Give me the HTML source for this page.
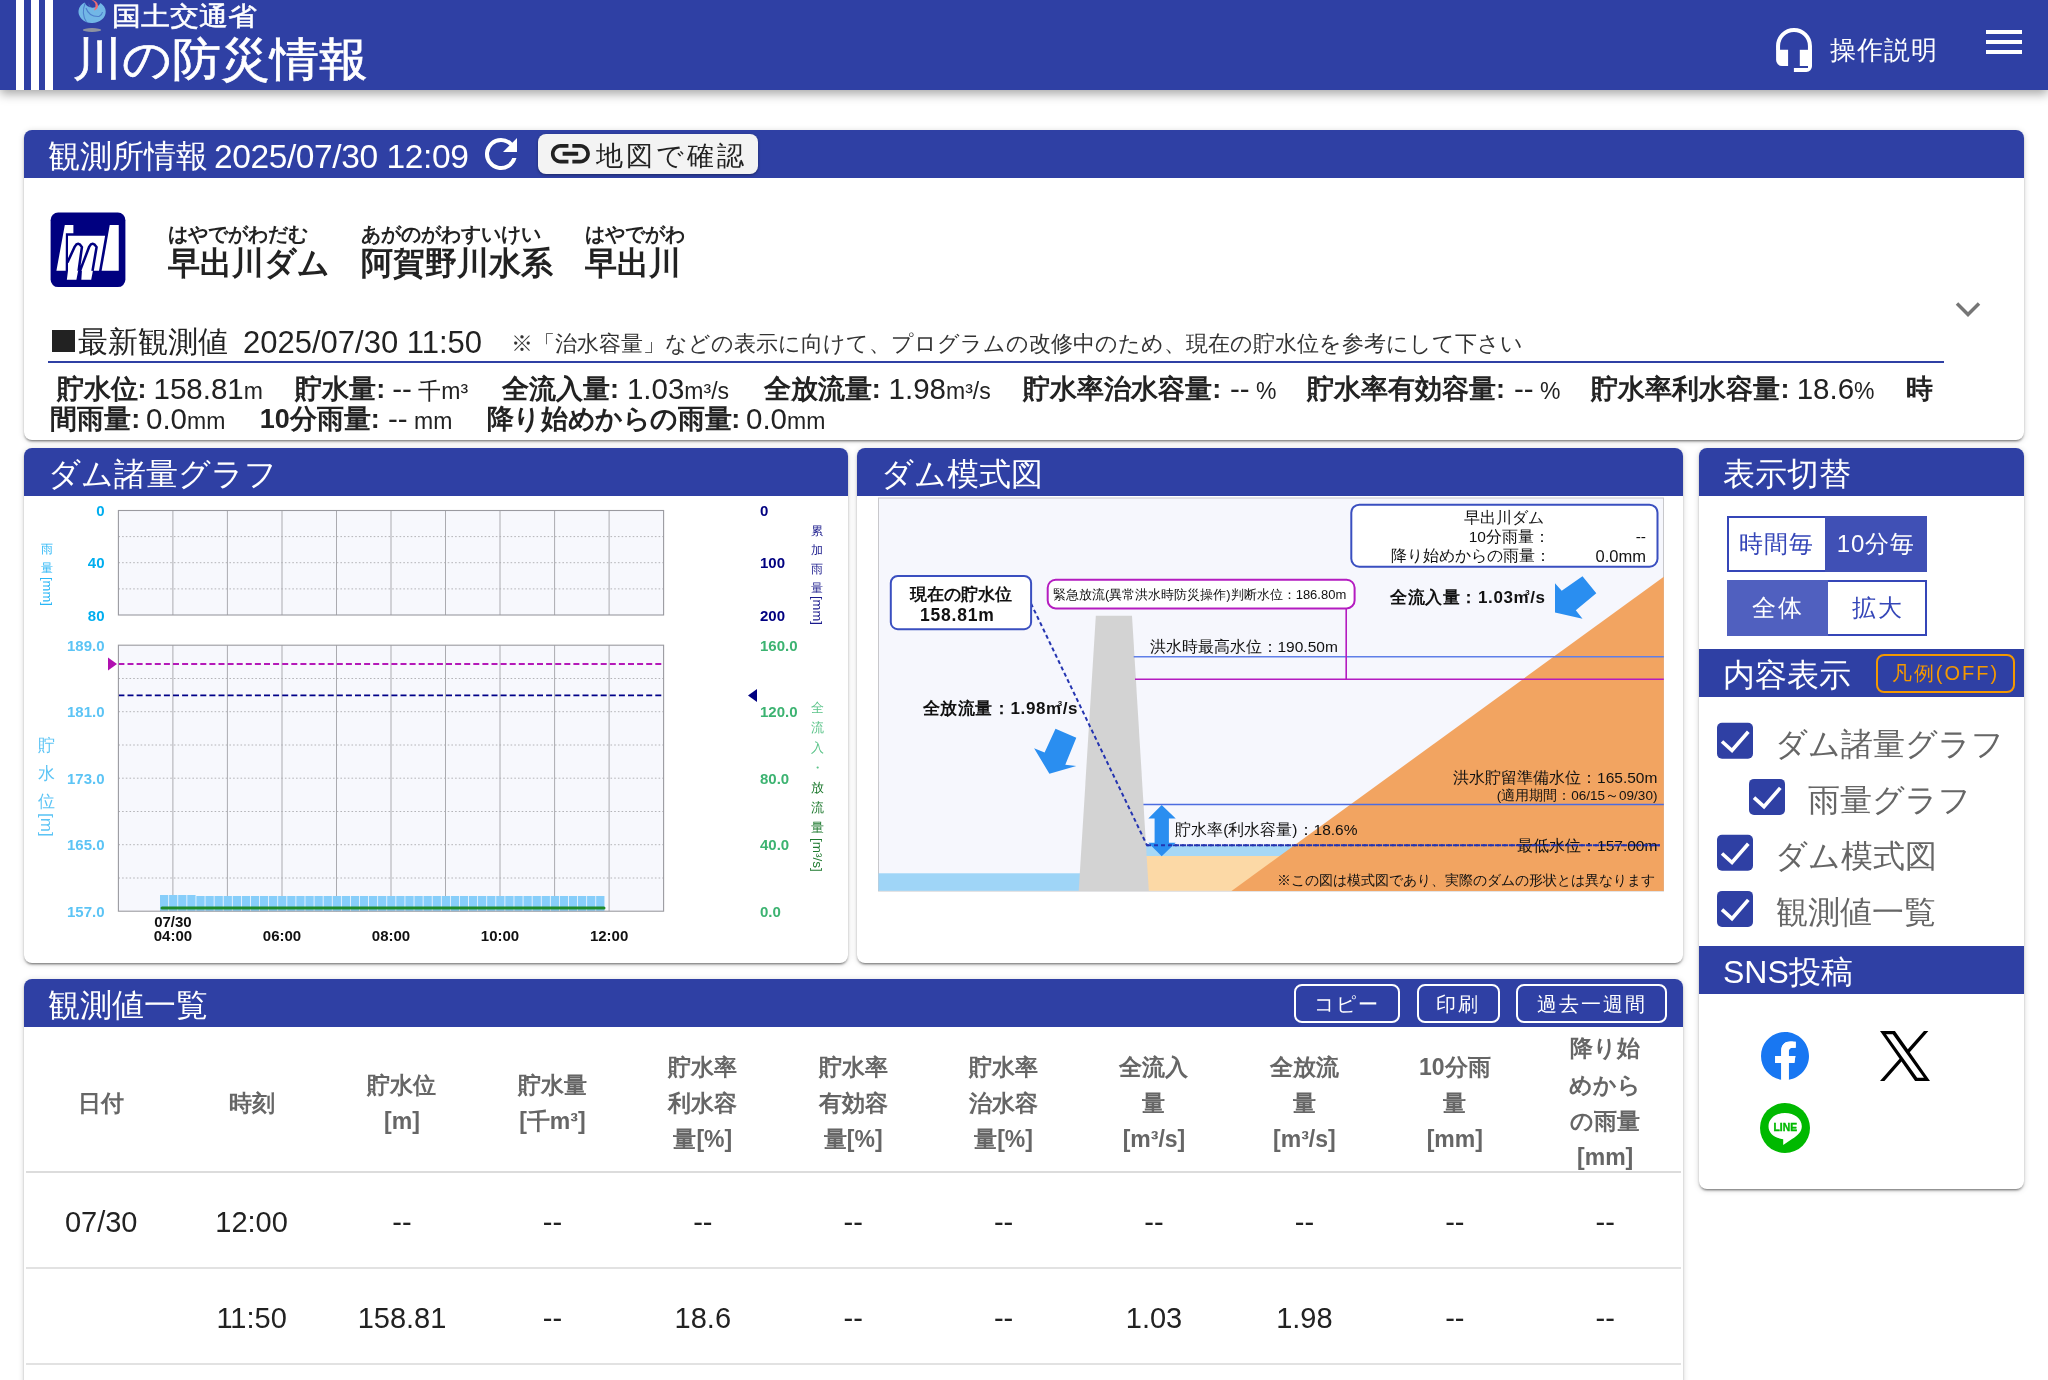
<!DOCTYPE html>
<html lang="ja">
<head>
<meta charset="utf-8">
<style>
*{box-sizing:border-box;margin:0;padding:0}
body{will-change:transform}
html,body{width:2048px;height:1380px;overflow:hidden;background:#fff;font-family:"Liberation Sans",sans-serif;color:#222}
.abs{position:absolute}
.hdr{position:absolute;left:0;top:0;width:2048px;height:90px;background:#2f40a4;box-shadow:0 4px 10px rgba(0,0,0,.35);z-index:5}
.stripe{position:absolute;top:0;height:90px;width:8px;background:#fff}
.card{position:absolute;background:#fff;border-radius:8px;box-shadow:0 2px 2px rgba(0,0,0,.24),0 3px 1px -2px rgba(0,0,0,.2),0 1px 6px rgba(0,0,0,.16)}
.bar{position:absolute;background:#2f40a4;border-radius:8px 8px 0 0;color:#fff;font-size:32px;line-height:48px;white-space:nowrap}
.t{position:absolute;white-space:nowrap}
small{font-size:22px;line-height:0}
b{font-weight:bold}
.tbtn{top:4.5px;height:39px;line-height:37px;border:2px solid #fff;border-radius:8px;text-align:center;font-size:20px;letter-spacing:2px}
.th{position:absolute;top:1031px;height:144px;display:flex;align-items:center;justify-content:center;text-align:center;font-size:23px;line-height:36.3px;font-weight:bold;color:#666}
.td{position:absolute;height:96px;line-height:100px;text-align:center;font-size:29px;color:#222}
.obs .t{font-size:27px;line-height:30px;color:#222}
.obs span.t{font-size:29.5px}
.obs small{font-size:23px}
</style>
</head>
<body>
<!-- HEADER -->
<div class="hdr">
  <div class="stripe" style="left:16px"></div>
  <div class="stripe" style="left:31px"></div>
  <div class="stripe" style="left:45px"></div>
  <svg class="abs" style="left:70px;top:0" width="45" height="36" viewBox="70 0 45 36">
    <defs><filter id="bl" x="-20%" y="-20%" width="140%" height="140%"><feGaussianBlur stdDeviation="0.45"/></filter></defs>
    <g filter="url(#bl)">
    <path d="M84.5 2.5 A13.6 11.2 0 1 0 100.5 3 A9 9 0 0 1 84.5 2.5Z" fill="#72b7e6"/>
    <path d="M88.5 1.5 A9 9 0 0 0 100 10.5 A10 9 0 0 1 88.5 1.5Z" fill="#72b7e6"/>
    <path d="M85 3.5 Q81 14 86.5 22" fill="none" stroke="#4d7fcc" stroke-width="1.1"/>
    <path d="M86 8 Q89 17 99 16.5 Q102 15 102.5 12" fill="none" stroke="#4d7fcc" stroke-width="1.1"/>
    <path d="M90.5 -0.5 Q97.5 0.5 98 5.5 Q98 9.5 94 10.5 Q96 7 95.5 4.5 Q95 1.5 90.5 -0.5Z" fill="#ef6c72"/>
    <ellipse cx="92" cy="30" rx="9.2" ry="1.9" fill="#8e92a0"/>
    </g>
  </svg>
  <div class="t" style="left:112px;top:1px;font-size:29px;line-height:32px;color:#fff;-webkit-text-stroke:0.6px #fff;transform:scaleY(0.9);transform-origin:0 3px">国土交通省</div>
  <div class="t" style="left:73px;top:34px;font-size:49px;line-height:52px;color:#fff;letter-spacing:0px;transform:scaleY(0.94);transform-origin:0 3px;-webkit-text-stroke:0.7px #fff">川の防災情報</div>
  <!-- headset -->
  <svg class="abs" style="left:1770px;top:22px" width="50" height="56" viewBox="1770 22 50 56">
    <path d="M1778.05 50 V45.9 A15.95 15.95 0 0 1 1809.95 45.9 V50" fill="none" stroke="#fff" stroke-width="4"/>
    <path d="M1776.1 49.8 H1788.1 V66 H1782 A5.9 5.9 0 0 1 1776.1 60.1 Z" fill="#fff"/>
    <path d="M1799.8 49.8 H1812 V66 H1799.8 Z" fill="#fff"/>
    <path d="M1812 49.8 V66.3 A5.6 5.6 0 0 1 1806.4 71.9 H1793.9 V67.9 H1808 V49.8 Z" fill="#fff"/>
  </svg>
  <div class="t" style="left:1830px;top:34px;font-size:26px;line-height:32px;color:#fff;letter-spacing:1px">操作説明</div>
  <div class="abs" style="left:1986px;top:30px;width:36px;height:4px;background:#fff"></div>
  <div class="abs" style="left:1986px;top:40px;width:36px;height:4px;background:#fff"></div>
  <div class="abs" style="left:1986px;top:50px;width:36px;height:4px;background:#fff"></div>
</div>

<!-- SECTION 1 -->
<div class="card" style="left:24px;top:130px;width:2000px;height:310px"></div>
<div class="bar" style="left:24px;top:130px;width:2000px;height:48px">
  <span class="t" style="left:24px;top:1.5px">観測所情報</span><span class="t" style="left:190px;top:3px;font-size:33.5px;letter-spacing:-0.4px">2025/07/30 12:09</span>
  <span class="t" style="left:453px;top:0px;width:48px;height:48px">
    <svg width="48" height="48" viewBox="0 0 24 24" style="display:block"><path d="M17.65 6.35A7.96 7.96 0 0 0 12 4a8 8 0 1 0 7.73 10h-2.08A6 6 0 1 1 12 6c1.66 0 3.14.69 4.22 1.78L13 11h7V4l-2.35 2.35z" fill="#fff"/></svg>
  </span>
  <span class="abs" style="left:514px;top:4px;width:220px;height:40px;background:#f3f3f3;border-radius:8px;box-shadow:0 1px 3px rgba(0,0,0,.4)">
    <svg class="abs" style="left:9.4px;top:8px" width="46.8" height="23.4" viewBox="0 0 24 12" preserveAspectRatio="none"><path d="M3.9 6c0-1.71 1.39-3.1 3.1-3.1h4V1H7C4.24 1 2 3.24 2 6s2.24 5 5 5h4V9.1H7C5.29 9.1 3.9 7.71 3.9 6zM8 7h8V5H8v2zm9-6h-4v1.9h4c1.71 0 3.1 1.39 3.1 3.1s-1.39 3.1-3.1 3.1h-4V11h4c2.76 0 5-2.24 5-5s-2.24-5-5-5z" fill="#222"/></svg>
    <span class="t" style="left:58px;top:-2px;font-size:27px;color:#222;letter-spacing:3px">地図で確認</span>
  </span>
</div>
<!-- station -->
<svg class="abs" style="left:48px;top:210px" width="80" height="80" viewBox="0 0 1380 1380">
  <rect x="45" y="45" width="1290" height="1285" rx="130" fill="#000080"/>
  <path d="M290 260 H438 V400 H308 L305 1050 H145 Z" fill="#fff"/>
  <path d="M1065 260 H1220 V1050 H925 Z" fill="#fff"/>
  <path d="M345 445 H985 L880 1050 H775 L745 1205 H575 L585 1050 H520 L490 1205 H325 L345 1050 Z" fill="#fff"/>
  <path d="M335 905 L462 630 Q520 530 585 640 L528 1050 M552 1050 L712 630 Q770 530 838 640 L768 1050" fill="none" stroke="#000080" stroke-width="44" stroke-linejoin="round"/>
</svg>
<div class="t" style="left:168px;top:222px;font-size:20px;line-height:24px;font-weight:bold;color:#222">はやでがわだむ</div>
<div class="t" style="left:168px;top:244px;font-size:32px;line-height:38px;font-weight:bold;color:#222">早出川ダム</div>
<div class="t" style="left:361px;top:222px;font-size:20px;line-height:24px;font-weight:bold;color:#222">あがのがわすいけい</div>
<div class="t" style="left:361px;top:244px;font-size:32px;line-height:38px;font-weight:bold;color:#222">阿賀野川水系</div>
<div class="t" style="left:585px;top:222px;font-size:20px;line-height:24px;font-weight:bold;color:#222">はやでがわ</div>
<div class="t" style="left:585px;top:244px;font-size:32px;line-height:38px;font-weight:bold;color:#222">早出川</div>
<svg class="abs" style="left:1954px;top:298px" width="28" height="22" viewBox="0 0 28 22"><path d="M3 5.6 L14 16.6 L25 5.6" fill="none" stroke="#767676" stroke-width="3.5"/></svg>
<div class="abs" style="left:51.5px;top:329.5px;width:23.5px;height:22.5px;background:#222"></div>
<div class="t" style="left:78px;top:322px;font-size:30px;line-height:40px;color:#222">最新観測値</div>
<div class="t" style="left:243px;top:323px;font-size:31px;line-height:40px;color:#222">2025/07/30 11:50</div>
<div class="t" style="left:511px;top:330px;font-size:22px;line-height:28px;color:#333">※「治水容量」などの表示に向けて、プログラムの改修中のため、現在の貯水位を参考にして下さい</div>
<div class="abs" style="left:48px;top:361px;width:1896px;height:2px;background:#2f40a4"></div>
<div class="obs">
<b class="t" style="left:56.5px;top:374px">貯水位:</b>
<span class="t" style="left:153.5px;top:374px">158.81<small>m</small></span>
<b class="t" style="left:295.2px;top:374px">貯水量:</b>
<span class="t" style="left:392.2px;top:374px">--<small>&nbsp;千m³</small></span>
<b class="t" style="left:502px;top:374px">全流入量:</b>
<span class="t" style="left:626.9px;top:374px">1.03<small>m³/s</small></span>
<b class="t" style="left:763.7px;top:374px">全放流量:</b>
<span class="t" style="left:888.6px;top:374px">1.98<small>m³/s</small></span>
<b class="t" style="left:1023.3px;top:374px">貯水率治水容量:</b>
<span class="t" style="left:1230.0px;top:374px">--<small>&nbsp;%</small></span>
<b class="t" style="left:1307px;top:374px">貯水率有効容量:</b>
<span class="t" style="left:1514.0px;top:374px">--<small>&nbsp;%</small></span>
<b class="t" style="left:1591.4px;top:374px">貯水率利水容量:</b>
<span class="t" style="left:1796.7px;top:374px">18.6<small>%</small></span>
<b class="t" style="left:1905.8px;top:374px">時</b>
<b class="t" style="left:50.2px;top:404px">間雨量:</b>
<span class="t" style="left:146.0px;top:404px">0.0<small>mm</small></span>
<b class="t" style="left:259.7px;top:404px">10分雨量:</b>
<span class="t" style="left:388.0px;top:404px">--<small>&nbsp;mm</small></span>
<b class="t" style="left:486.9px;top:404px;letter-spacing:-0.4px">降り始めからの雨量:</b>
<span class="t" style="left:746.0px;top:404px">0.0<small>mm</small></span>
</div>


<!-- PANEL A -->
<div class="card" style="left:24px;top:448px;width:824px;height:515px"></div>
<div class="bar" style="left:24px;top:448px;width:824px;height:48px;line-height:48px"><span class="t" style="left:24px;top:1.5px">ダム諸量グラフ</span></div>
<svg class="abs" style="left:24px;top:496px" width="824" height="467" viewBox="24 496 824 467" font-family="Liberation Sans, sans-serif">
<rect x="118.4" y="510.5" width="545.2" height="104.5" fill="#f7f8fd"/>
<line x1="118.4" y1="536.6" x2="663.6" y2="536.6" stroke="#b4b4b8" stroke-width="1" stroke-dasharray="1.6 2.1"/>
<line x1="118.4" y1="562.7" x2="663.6" y2="562.7" stroke="#b4b4b8" stroke-width="1" stroke-dasharray="1.6 2.1"/>
<line x1="118.4" y1="588.9" x2="663.6" y2="588.9" stroke="#b4b4b8" stroke-width="1" stroke-dasharray="1.6 2.1"/>
<line x1="172.9" y1="510.5" x2="172.9" y2="615" stroke="#ababb0" stroke-width="1"/>
<line x1="227.4" y1="510.5" x2="227.4" y2="615" stroke="#ababb0" stroke-width="1"/>
<line x1="282.0" y1="510.5" x2="282.0" y2="615" stroke="#ababb0" stroke-width="1"/>
<line x1="336.5" y1="510.5" x2="336.5" y2="615" stroke="#ababb0" stroke-width="1"/>
<line x1="391.0" y1="510.5" x2="391.0" y2="615" stroke="#ababb0" stroke-width="1"/>
<line x1="445.5" y1="510.5" x2="445.5" y2="615" stroke="#ababb0" stroke-width="1"/>
<line x1="500.0" y1="510.5" x2="500.0" y2="615" stroke="#ababb0" stroke-width="1"/>
<line x1="554.6" y1="510.5" x2="554.6" y2="615" stroke="#ababb0" stroke-width="1"/>
<line x1="609.1" y1="510.5" x2="609.1" y2="615" stroke="#ababb0" stroke-width="1"/>
<rect x="118.4" y="510.5" width="545.2" height="104.5" fill="none" stroke="#9a9aa0" stroke-width="1.1"/>
<rect x="118.4" y="645.2" width="545.2" height="266.0" fill="#f7f8fd"/>
<line x1="118.4" y1="678.5" x2="663.6" y2="678.5" stroke="#b4b4b8" stroke-width="1" stroke-dasharray="1.6 2.1"/>
<line x1="118.4" y1="711.7" x2="663.6" y2="711.7" stroke="#b4b4b8" stroke-width="1" stroke-dasharray="1.6 2.1"/>
<line x1="118.4" y1="745.0" x2="663.6" y2="745.0" stroke="#b4b4b8" stroke-width="1" stroke-dasharray="1.6 2.1"/>
<line x1="118.4" y1="778.2" x2="663.6" y2="778.2" stroke="#b4b4b8" stroke-width="1" stroke-dasharray="1.6 2.1"/>
<line x1="118.4" y1="811.5" x2="663.6" y2="811.5" stroke="#b4b4b8" stroke-width="1" stroke-dasharray="1.6 2.1"/>
<line x1="118.4" y1="844.7" x2="663.6" y2="844.7" stroke="#b4b4b8" stroke-width="1" stroke-dasharray="1.6 2.1"/>
<line x1="118.4" y1="878.0" x2="663.6" y2="878.0" stroke="#b4b4b8" stroke-width="1" stroke-dasharray="1.6 2.1"/>
<line x1="172.9" y1="645.2" x2="172.9" y2="911.2" stroke="#ababb0" stroke-width="1"/>
<line x1="227.4" y1="645.2" x2="227.4" y2="911.2" stroke="#ababb0" stroke-width="1"/>
<line x1="282.0" y1="645.2" x2="282.0" y2="911.2" stroke="#ababb0" stroke-width="1"/>
<line x1="336.5" y1="645.2" x2="336.5" y2="911.2" stroke="#ababb0" stroke-width="1"/>
<line x1="391.0" y1="645.2" x2="391.0" y2="911.2" stroke="#ababb0" stroke-width="1"/>
<line x1="445.5" y1="645.2" x2="445.5" y2="911.2" stroke="#ababb0" stroke-width="1"/>
<line x1="500.0" y1="645.2" x2="500.0" y2="911.2" stroke="#ababb0" stroke-width="1"/>
<line x1="554.6" y1="645.2" x2="554.6" y2="911.2" stroke="#ababb0" stroke-width="1"/>
<line x1="609.1" y1="645.2" x2="609.1" y2="911.2" stroke="#ababb0" stroke-width="1"/>
<rect x="160.00" y="895" width="8.29" height="16.200000000000045" fill="#87cefa"/>
<rect x="169.09" y="895" width="8.29" height="16.200000000000045" fill="#87cefa"/>
<rect x="178.17" y="895" width="8.29" height="16.200000000000045" fill="#87cefa"/>
<rect x="187.26" y="895" width="8.29" height="16.200000000000045" fill="#87cefa"/>
<rect x="196.35" y="896" width="8.29" height="15.200000000000045" fill="#87cefa"/>
<rect x="205.43" y="896" width="8.29" height="15.200000000000045" fill="#87cefa"/>
<rect x="214.52" y="896" width="8.29" height="15.200000000000045" fill="#87cefa"/>
<rect x="223.61" y="896" width="8.29" height="15.200000000000045" fill="#87cefa"/>
<rect x="232.69" y="896" width="8.29" height="15.200000000000045" fill="#87cefa"/>
<rect x="241.78" y="896" width="8.29" height="15.200000000000045" fill="#87cefa"/>
<rect x="250.87" y="896" width="8.29" height="15.200000000000045" fill="#87cefa"/>
<rect x="259.95" y="896" width="8.29" height="15.200000000000045" fill="#87cefa"/>
<rect x="269.04" y="896" width="8.29" height="15.200000000000045" fill="#87cefa"/>
<rect x="278.13" y="896" width="8.29" height="15.200000000000045" fill="#87cefa"/>
<rect x="287.21" y="896" width="8.29" height="15.200000000000045" fill="#87cefa"/>
<rect x="296.30" y="896" width="8.29" height="15.200000000000045" fill="#87cefa"/>
<rect x="305.39" y="896" width="8.29" height="15.200000000000045" fill="#87cefa"/>
<rect x="314.47" y="896" width="8.29" height="15.200000000000045" fill="#87cefa"/>
<rect x="323.56" y="896" width="8.29" height="15.200000000000045" fill="#87cefa"/>
<rect x="332.65" y="896" width="8.29" height="15.200000000000045" fill="#87cefa"/>
<rect x="341.73" y="896" width="8.29" height="15.200000000000045" fill="#87cefa"/>
<rect x="350.82" y="896" width="8.29" height="15.200000000000045" fill="#87cefa"/>
<rect x="359.91" y="896" width="8.29" height="15.200000000000045" fill="#87cefa"/>
<rect x="368.99" y="896" width="8.29" height="15.200000000000045" fill="#87cefa"/>
<rect x="378.08" y="896" width="8.29" height="15.200000000000045" fill="#87cefa"/>
<rect x="387.17" y="896" width="8.29" height="15.200000000000045" fill="#87cefa"/>
<rect x="396.25" y="896" width="8.29" height="15.200000000000045" fill="#87cefa"/>
<rect x="405.34" y="896" width="8.29" height="15.200000000000045" fill="#87cefa"/>
<rect x="414.43" y="896" width="8.29" height="15.200000000000045" fill="#87cefa"/>
<rect x="423.51" y="896" width="8.29" height="15.200000000000045" fill="#87cefa"/>
<rect x="432.60" y="896" width="8.29" height="15.200000000000045" fill="#87cefa"/>
<rect x="441.69" y="896" width="8.29" height="15.200000000000045" fill="#87cefa"/>
<rect x="450.77" y="896" width="8.29" height="15.200000000000045" fill="#87cefa"/>
<rect x="459.86" y="896" width="8.29" height="15.200000000000045" fill="#87cefa"/>
<rect x="468.95" y="896" width="8.29" height="15.200000000000045" fill="#87cefa"/>
<rect x="478.03" y="896" width="8.29" height="15.200000000000045" fill="#87cefa"/>
<rect x="487.12" y="896" width="8.29" height="15.200000000000045" fill="#87cefa"/>
<rect x="496.21" y="896" width="8.29" height="15.200000000000045" fill="#87cefa"/>
<rect x="505.29" y="896" width="8.29" height="15.200000000000045" fill="#87cefa"/>
<rect x="514.38" y="896" width="8.29" height="15.200000000000045" fill="#87cefa"/>
<rect x="523.47" y="896" width="8.29" height="15.200000000000045" fill="#87cefa"/>
<rect x="532.55" y="896" width="8.29" height="15.200000000000045" fill="#87cefa"/>
<rect x="541.64" y="896" width="8.29" height="15.200000000000045" fill="#87cefa"/>
<rect x="550.73" y="896" width="8.29" height="15.200000000000045" fill="#87cefa"/>
<rect x="559.81" y="896" width="8.29" height="15.200000000000045" fill="#87cefa"/>
<rect x="568.90" y="896" width="8.29" height="15.200000000000045" fill="#87cefa"/>
<rect x="577.99" y="896" width="8.29" height="15.200000000000045" fill="#87cefa"/>
<rect x="587.07" y="896" width="8.29" height="15.200000000000045" fill="#87cefa"/>
<rect x="596.16" y="896" width="8.29" height="15.200000000000045" fill="#87cefa"/>
<line x1="162" y1="908" x2="604" y2="908" stroke="#1f8a2a" stroke-width="3" stroke-linecap="round"/>
<line x1="118.4" y1="664" x2="663.6" y2="664" stroke="#b41ab8" stroke-width="1.8" stroke-dasharray="6 3.1"/>
<line x1="118.4" y1="695.4" x2="663.6" y2="695.4" stroke="#000088" stroke-width="1.8" stroke-dasharray="6 3.1"/>
<rect x="118.4" y="645.2" width="545.2" height="266.0" fill="none" stroke="#9a9aa0" stroke-width="1.1"/>
<path d="M108 657.5 L117 664 L108 670.5Z" fill="#b010b0"/>
<path d="M757 689 L748 695.5 L757 702Z" fill="#000080"/>
<text x="104.5" y="515.5" text-anchor="end" font-size="15" font-weight="bold" fill="#00aeef">0</text>
<text x="104.5" y="568.2" text-anchor="end" font-size="15" font-weight="bold" fill="#00aeef">40</text>
<text x="104.5" y="620.5" text-anchor="end" font-size="15" font-weight="bold" fill="#00aeef">80</text>
<text x="104.5" y="650.7" text-anchor="end" font-size="15" font-weight="bold" fill="#5cc4f5">189.0</text>
<text x="104.5" y="717.2" text-anchor="end" font-size="15" font-weight="bold" fill="#5cc4f5">181.0</text>
<text x="104.5" y="783.7" text-anchor="end" font-size="15" font-weight="bold" fill="#5cc4f5">173.0</text>
<text x="104.5" y="850.2" text-anchor="end" font-size="15" font-weight="bold" fill="#5cc4f5">165.0</text>
<text x="104.5" y="916.7" text-anchor="end" font-size="15" font-weight="bold" fill="#5cc4f5">157.0</text>
<text x="760" y="515.5" font-size="15" font-weight="bold" fill="#000080">0</text>
<text x="760" y="568.2" font-size="15" font-weight="bold" fill="#000080">100</text>
<text x="760" y="620.5" font-size="15" font-weight="bold" fill="#000080">200</text>
<text x="760" y="650.7" font-size="15" font-weight="bold" fill="#3cb371">160.0</text>
<text x="760" y="717.2" font-size="15" font-weight="bold" fill="#3cb371">120.0</text>
<text x="760" y="783.7" font-size="15" font-weight="bold" fill="#3cb371">80.0</text>
<text x="760" y="850.2" font-size="15" font-weight="bold" fill="#3cb371">40.0</text>
<text x="760" y="916.7" font-size="15" font-weight="bold" fill="#3cb371">0.0</text>
<text x="172.9" y="941" text-anchor="middle" font-size="15" font-weight="bold" fill="#111">04:00</text>
<text x="282.0" y="941" text-anchor="middle" font-size="15" font-weight="bold" fill="#111">06:00</text>
<text x="391.0" y="941" text-anchor="middle" font-size="15" font-weight="bold" fill="#111">08:00</text>
<text x="500.0" y="941" text-anchor="middle" font-size="15" font-weight="bold" fill="#111">10:00</text>
<text x="609.1" y="941" text-anchor="middle" font-size="15" font-weight="bold" fill="#111">12:00</text>
<text x="172.9" y="926.5" text-anchor="middle" font-size="15" font-weight="bold" fill="#111">07/30</text>
<text x="46.7" y="553" text-anchor="middle" font-size="12" fill="#29b6f6">雨</text>
<text x="46.7" y="572" text-anchor="middle" font-size="12" fill="#29b6f6">量</text>
<text x="0" y="0" transform="translate(42.5 577) rotate(90)" font-size="13" fill="#29b6f6">[mm]</text>
<text x="46.6" y="751" text-anchor="middle" font-size="17" fill="#5cc4f5">貯</text>
<text x="46.6" y="779" text-anchor="middle" font-size="17" fill="#5cc4f5">水</text>
<text x="46.6" y="807" text-anchor="middle" font-size="17" fill="#5cc4f5">位</text>
<text x="0" y="0" transform="translate(41 813) rotate(90)" font-size="17" fill="#5cc4f5">[m]</text>
<text x="817" y="535" text-anchor="middle" font-size="12" fill="#1a1a8c">累</text>
<text x="817" y="554" text-anchor="middle" font-size="12" fill="#1a1a8c">加</text>
<text x="817" y="573" text-anchor="middle" font-size="12" fill="#1a1a8c">雨</text>
<text x="817" y="592" text-anchor="middle" font-size="12" fill="#1a1a8c">量</text>
<text x="0" y="0" transform="translate(813 596) rotate(90)" font-size="13" fill="#1a1a8c">[mm]</text>
<text x="817" y="712" text-anchor="middle" font-size="12.5" fill="#5cc48a">全</text>
<text x="817" y="732" text-anchor="middle" font-size="12.5" fill="#5cc48a">流</text>
<text x="817" y="752" text-anchor="middle" font-size="12.5" fill="#5cc48a">入</text>
<text x="817" y="772" text-anchor="middle" font-size="12.5" fill="#5cc48a">・</text>
<text x="817" y="792" text-anchor="middle" font-size="12.5" fill="#1f7a30">放</text>
<text x="817" y="812" text-anchor="middle" font-size="12.5" fill="#1f7a30">流</text>
<text x="817" y="832" text-anchor="middle" font-size="12.5" fill="#1f7a30">量</text>
<text x="0" y="0" transform="translate(812.5 838) rotate(90)" font-size="13.5" fill="#1f7a30">[m³/s]</text>
</svg>
<!-- /PANEL A -->
<!-- PANEL B -->
<div class="card" style="left:857px;top:448px;width:826px;height:515px"></div>
<div class="bar" style="left:857px;top:448px;width:826px;height:48px;line-height:48px"><span class="t" style="left:24px;top:1.5px">ダム模式図</span></div>
<svg class="abs" style="left:857px;top:496px" width="826" height="467" viewBox="857 496 826 467" font-family="Liberation Sans, sans-serif">
  <rect x="878.5" y="498" width="785" height="393" fill="#f6f7fd" stroke="#c8c8cc" stroke-width="1"/>
  <!-- downstream water -->
  <rect x="878.5" y="873.3" width="202" height="17.5" fill="#9fd5f7"/>
  <!-- reservoir peach & water -->
  <rect x="1146" y="855.8" width="200" height="35" fill="#fcd9a6"/>
  <rect x="1146" y="846" width="200" height="10" fill="#a6d8f6"/>
  <!-- orange slope -->
  <path d="M1231.5 891 L1663.8 576.7 L1663.8 891 Z" fill="#f2a461"/>
  <!-- dam -->
  <path d="M1095.8 615.7 L1132 615.7 L1148.8 891 L1078.7 891 Z" fill="#d3d3d3"/>
  <!-- lines -->
  <line x1="1133.7" y1="656.7" x2="1663.8" y2="656.7" stroke="#5f7fe8" stroke-width="1.6"/>
  <line x1="1135" y1="679.2" x2="1663.8" y2="679.2" stroke="#b41cc0" stroke-width="1.6"/>
  <line x1="1346.2" y1="607.5" x2="1346.2" y2="679.2" stroke="#b41cc0" stroke-width="1.6"/>
  <line x1="1143.4" y1="804.5" x2="1663.8" y2="804.5" stroke="#4c6ce0" stroke-width="1.6"/>
  <!-- dashed -->
  <path d="M1031 603.5 L1147 845.3 L1660 845.3" fill="none" stroke="#2434b0" stroke-width="2" stroke-dasharray="4 3"/>
  <!-- double arrow -->
  <path d="M1161.7 805 L1175.7 818.4 L1168.9 818.4 L1168.9 842.8 L1175.7 842.8 L1161.7 856.2 L1148.3 842.8 L1154.6 842.8 L1154.6 818.4 L1148.3 818.4 Z" fill="#2a8ef0"/>
  <!-- arrows -->
  <path d="M1555 583.3 L1561.7 590.8 L1582.5 576.3 L1596.3 593.3 L1575.8 610.3 L1582.5 618.7 L1555 612.5 Z" fill="#2a8ef0"/>
  <path d="M1055.5 728.8 L1076.3 737.8 L1065.3 764.7 L1076.3 765.9 L1049.4 773.7 L1034.1 748.3 L1044.6 752.5 Z" fill="#2a8ef0"/>
  <!-- boxes -->
  <rect x="1351.3" y="504.7" width="306.2" height="62" rx="8" fill="#fff" stroke="#3a4fc0" stroke-width="2"/>
  <rect x="890.8" y="575.9" width="140.3" height="53.3" rx="7" fill="#fff" stroke="#3a4fc0" stroke-width="2"/>
  <rect x="1047.7" y="579.8" width="306.9" height="28.6" rx="8" fill="#fff" stroke="#b41cc0" stroke-width="2"/>
  <!-- texts -->
  <g fill="#111">
    <text x="1504" y="523" text-anchor="middle" font-size="15.5">早出川ダム</text>
    <text x="1550" y="542" text-anchor="end" font-size="15.5">10分雨量：</text>
    <text x="1646" y="542" text-anchor="end" font-size="15.5">--</text>
    <text x="1551" y="561" text-anchor="end" font-size="15.5">降り始めからの雨量：</text>
    <text x="1646" y="561.5" text-anchor="end" font-size="16.5">0.0mm</text>
    <text x="961" y="600" text-anchor="middle" font-size="17" font-weight="bold">現在の貯水位</text>
    <text x="920" y="620.5" font-size="17.5" font-weight="bold" letter-spacing="0.8">158.81m</text>
    <text x="1053" y="599" font-size="13">緊急放流(異常洪水時防災操作)判断水位：186.80m</text>
    <text x="1149.5" y="652" font-size="15.5">洪水時最高水位：190.50m</text>
    <text x="1390" y="602.5" font-size="17" font-weight="bold" letter-spacing="0.6">全流入量：1.03m<tspan font-size="8" dx="-4" dy="-8">3</tspan><tspan dy="8">/s</tspan></text>
    <text x="922.5" y="713.5" font-size="17" font-weight="bold" letter-spacing="0.6">全放流量：1.98m<tspan font-size="8" dx="-4" dy="-8">3</tspan><tspan dy="8">/s</tspan></text>
    <text x="1657.4" y="782.5" text-anchor="end" font-size="15.5">洪水貯留準備水位：165.50m</text>
    <text x="1657.4" y="800" text-anchor="end" font-size="13.5">(適用期間：06/15～09/30)</text>
    <text x="1175.2" y="835" font-size="15.5">貯水率(利水容量)：18.6%</text>
    <text x="1657.4" y="851" text-anchor="end" font-size="15.5">最低水位：157.00m</text>
    <text x="1655.4" y="885" text-anchor="end" font-size="14">※この図は模式図であり、実際のダムの形状とは異なります</text>
  </g>
  <path d="M1147 845.3 L1660 845.3" fill="none" stroke="#2434b0" stroke-width="2" stroke-dasharray="4 3"/>
</svg>

<!-- /PANEL B -->
<!-- PANEL C -->
<div class="card" style="left:1699px;top:448px;width:325px;height:741px"></div>
<div class="bar" style="left:1699px;top:448px;width:325px;height:48px;line-height:48px"><span class="t" style="left:24px;top:1.5px">表示切替</span></div>
<div class="abs" style="left:1727px;top:516px;width:200px;height:56px;border:2px solid #3546b8;background:#fff"></div>
<div class="abs" style="left:1825px;top:516px;width:102px;height:56px;background:#4050b5"></div>
<div class="t" style="left:1727px;top:516px;width:98px;height:56px;line-height:56px;text-align:center;font-size:24px;color:#3546b8;letter-spacing:1px">時間毎</div>
<div class="t" style="left:1825px;top:516px;width:102px;height:56px;line-height:56px;text-align:center;font-size:24px;color:#fff;letter-spacing:1px">10分毎</div>
<div class="abs" style="left:1727px;top:580px;width:200px;height:56px;border:2px solid #3546b8;background:#fff"></div>
<div class="abs" style="left:1727px;top:580px;width:101px;height:56px;background:#5060bf"></div>
<div class="t" style="left:1727px;top:580px;width:101px;height:56px;line-height:56px;text-align:center;font-size:24px;color:#fff;letter-spacing:2px">全体</div>
<div class="t" style="left:1828px;top:580px;width:99px;height:56px;line-height:56px;text-align:center;font-size:24px;color:#3546b8;letter-spacing:2px">拡大</div>
<div class="bar" style="left:1699px;top:649px;width:325px;height:48px;line-height:48px;border-radius:0"><span class="t" style="left:24px;top:1.5px">内容表示</span>
  <span class="abs" style="left:177px;top:4.5px;width:139px;height:39px;border:2.5px solid #f39800;border-radius:8px"></span>
  <span class="t" style="left:177px;top:4.5px;width:139px;height:39px;line-height:38px;text-align:center;font-size:20px;color:#f39800;letter-spacing:2px">凡例(OFF)</span>
</div>
<svg class="abs" style="left:1699px;top:697px" width="325" height="250" viewBox="1699 697 325 250">
  <g fill="#2f40a4">
    <rect x="1717" y="722.8" width="36" height="36" rx="5"/>
    <rect x="1749" y="778.9" width="36" height="36" rx="5"/>
    <rect x="1717" y="834.8" width="36" height="36" rx="5"/>
    <rect x="1717" y="890.9" width="36" height="36" rx="5"/>
  </g>
  <g fill="none" stroke="#fff" stroke-width="3.6">
    <path d="M1722 741.5 L1732 750.5 L1748.3 731.8"/>
    <path d="M1754 797.6 L1764 806.6 L1780.3 787.9"/>
    <path d="M1722 853.5 L1732 862.5 L1748.3 843.8"/>
    <path d="M1722 909.6 L1732 918.6 L1748.3 899.9"/>
  </g>
</svg>
<div class="t" style="left:1775px;top:725px;font-size:31.5px;line-height:38px;color:#666">ダム諸量グラフ</div>
<div class="t" style="left:1808px;top:781px;font-size:31.5px;line-height:38px;color:#666">雨量グラフ</div>
<div class="t" style="left:1775px;top:837px;font-size:31.5px;line-height:38px;color:#666">ダム模式図</div>
<div class="t" style="left:1776px;top:893px;font-size:31.5px;line-height:38px;color:#666">観測値一覧</div>
<div class="bar" style="left:1699px;top:946px;width:325px;height:48px;line-height:48px;border-radius:0"><span class="t" style="left:24px;top:1.5px">SNS投稿</span></div>
<svg class="abs" style="left:1761px;top:1032px" width="48" height="48" viewBox="0 0 1024 1024">
  <path d="M1024,512C1024,229.23,794.77,0,512,0S0,229.23,0,512c0,255.55,187.23,467.37,432,505.78V660H302V512H432V399.2C432,270.88,508.44,200,625.39,200c56,0,114.61,10,114.61,10V336H675.44c-63.6,0-83.44,39.470-83.44,80v96H734L711.3,660H592v357.78C836.77,979.37,1024,767.55,1024,512Z" fill="#1877f2"/>
  <path d="M711.3,660,734,512H592V416c0-40.49,19.84-80,83.44-80H740V210s-57.590-10-114.61-10C508.44,200,432,270.88,432,399.2V512H302V660H432v357.78a517.580,517.580,0,0,0,160,0V660Z" fill="#fff"/>
</svg>
<svg class="abs" style="left:1880px;top:1031px" width="50" height="50" viewBox="0 0 1200 1227" preserveAspectRatio="none">
  <path d="M714.163 519.284L1160.89 0H1055.03L667.137 450.887L357.328 0H0L468.492 681.821L0 1226.37H105.866L515.491 750.218L842.672 1226.37H1200L714.137 519.284H714.163ZM569.165 687.828L521.697 619.934L144.011 79.6944H306.615L611.412 515.685L658.88 583.579L1055.08 1150.3H892.476L569.165 687.854V687.828Z" fill="#000"/>
</svg>
<svg class="abs" style="left:1760px;top:1103px" width="50" height="50" viewBox="0 0 50 50">
  <circle cx="25" cy="25" r="25" fill="#00b900"/>
  <path d="M25 10 C15.5 10 8.5 15.8 8.5 23.2 C8.5 30 14 34.8 23.2 36.2 L23.2 42 L32 36 C38 32.5 41.8 28.5 41.8 23.2 C41.8 15.8 34.5 10 25 10Z" fill="#fff"/>
  <text x="25.3" y="27.8" text-anchor="middle" font-family="Liberation Sans, sans-serif" font-size="10.3" font-weight="bold" fill="#00b900" stroke="#00b900" stroke-width="0.4">LINE</text>
</svg>

<!-- /PANEL C -->
<!-- TABLE -->
<div class="card" style="left:24px;top:979px;width:1659px;height:420px"></div>
<div class="bar" style="left:24px;top:979px;width:1659px;height:48px;line-height:48px"><span class="t" style="left:24px;top:1.5px">観測値一覧</span>
  <span class="t tbtn" style="left:1269.5px;width:106px">コピー</span>
  <span class="t tbtn" style="left:1392.6px;width:83.3px">印刷</span>
  <span class="t tbtn" style="left:1492.3px;width:150.5px">過去一週間</span>
</div>
<div class="th" style="left:26.0px;width:150.4px">日付</div>
<div class="th" style="left:176.4px;width:150.4px">時刻</div>
<div class="th" style="left:326.8px;width:150.4px">貯水位<br>[m]</div>
<div class="th" style="left:477.2px;width:150.4px">貯水量<br>[千m³]</div>
<div class="th" style="left:627.6px;width:150.4px">貯水率<br>利水容<br>量[%]</div>
<div class="th" style="left:778.0px;width:150.4px">貯水率<br>有効容<br>量[%]</div>
<div class="th" style="left:928.4px;width:150.4px">貯水率<br>治水容<br>量[%]</div>
<div class="th" style="left:1078.8px;width:150.4px">全流入<br>量<br>[m³/s]</div>
<div class="th" style="left:1229.2px;width:150.4px">全放流<br>量<br>[m³/s]</div>
<div class="th" style="left:1379.6px;width:150.4px">10分雨<br>量<br>[mm]</div>
<div class="th" style="left:1530.0px;width:150.4px">降り始<br>めから<br>の雨量<br>[mm]</div>
<div class="td" style="left:26.0px;top:1172px;width:150.4px">07/30</div>
<div class="td" style="left:176.4px;top:1172px;width:150.4px">12:00</div>
<div class="td" style="left:326.8px;top:1172px;width:150.4px">--</div>
<div class="td" style="left:477.2px;top:1172px;width:150.4px">--</div>
<div class="td" style="left:627.6px;top:1172px;width:150.4px">--</div>
<div class="td" style="left:778.0px;top:1172px;width:150.4px">--</div>
<div class="td" style="left:928.4px;top:1172px;width:150.4px">--</div>
<div class="td" style="left:1078.8px;top:1172px;width:150.4px">--</div>
<div class="td" style="left:1229.2px;top:1172px;width:150.4px">--</div>
<div class="td" style="left:1379.6px;top:1172px;width:150.4px">--</div>
<div class="td" style="left:1530.0px;top:1172px;width:150.4px">--</div>
<div class="td" style="left:26.0px;top:1268px;width:150.4px"></div>
<div class="td" style="left:176.4px;top:1268px;width:150.4px">11:50</div>
<div class="td" style="left:326.8px;top:1268px;width:150.4px">158.81</div>
<div class="td" style="left:477.2px;top:1268px;width:150.4px">--</div>
<div class="td" style="left:627.6px;top:1268px;width:150.4px">18.6</div>
<div class="td" style="left:778.0px;top:1268px;width:150.4px">--</div>
<div class="td" style="left:928.4px;top:1268px;width:150.4px">--</div>
<div class="td" style="left:1078.8px;top:1268px;width:150.4px">1.03</div>
<div class="td" style="left:1229.2px;top:1268px;width:150.4px">1.98</div>
<div class="td" style="left:1379.6px;top:1268px;width:150.4px">--</div>
<div class="td" style="left:1530.0px;top:1268px;width:150.4px">--</div>
<div class="abs" style="left:26px;top:1170.5px;width:1655px;height:2px;background:#dcdcdc"></div>
<div class="abs" style="left:26px;top:1266.5px;width:1655px;height:2px;background:#e2e2e2"></div>
<div class="abs" style="left:26px;top:1362.5px;width:1655px;height:2px;background:#e2e2e2"></div>
<!-- /TABLE -->
</body>
</html>
